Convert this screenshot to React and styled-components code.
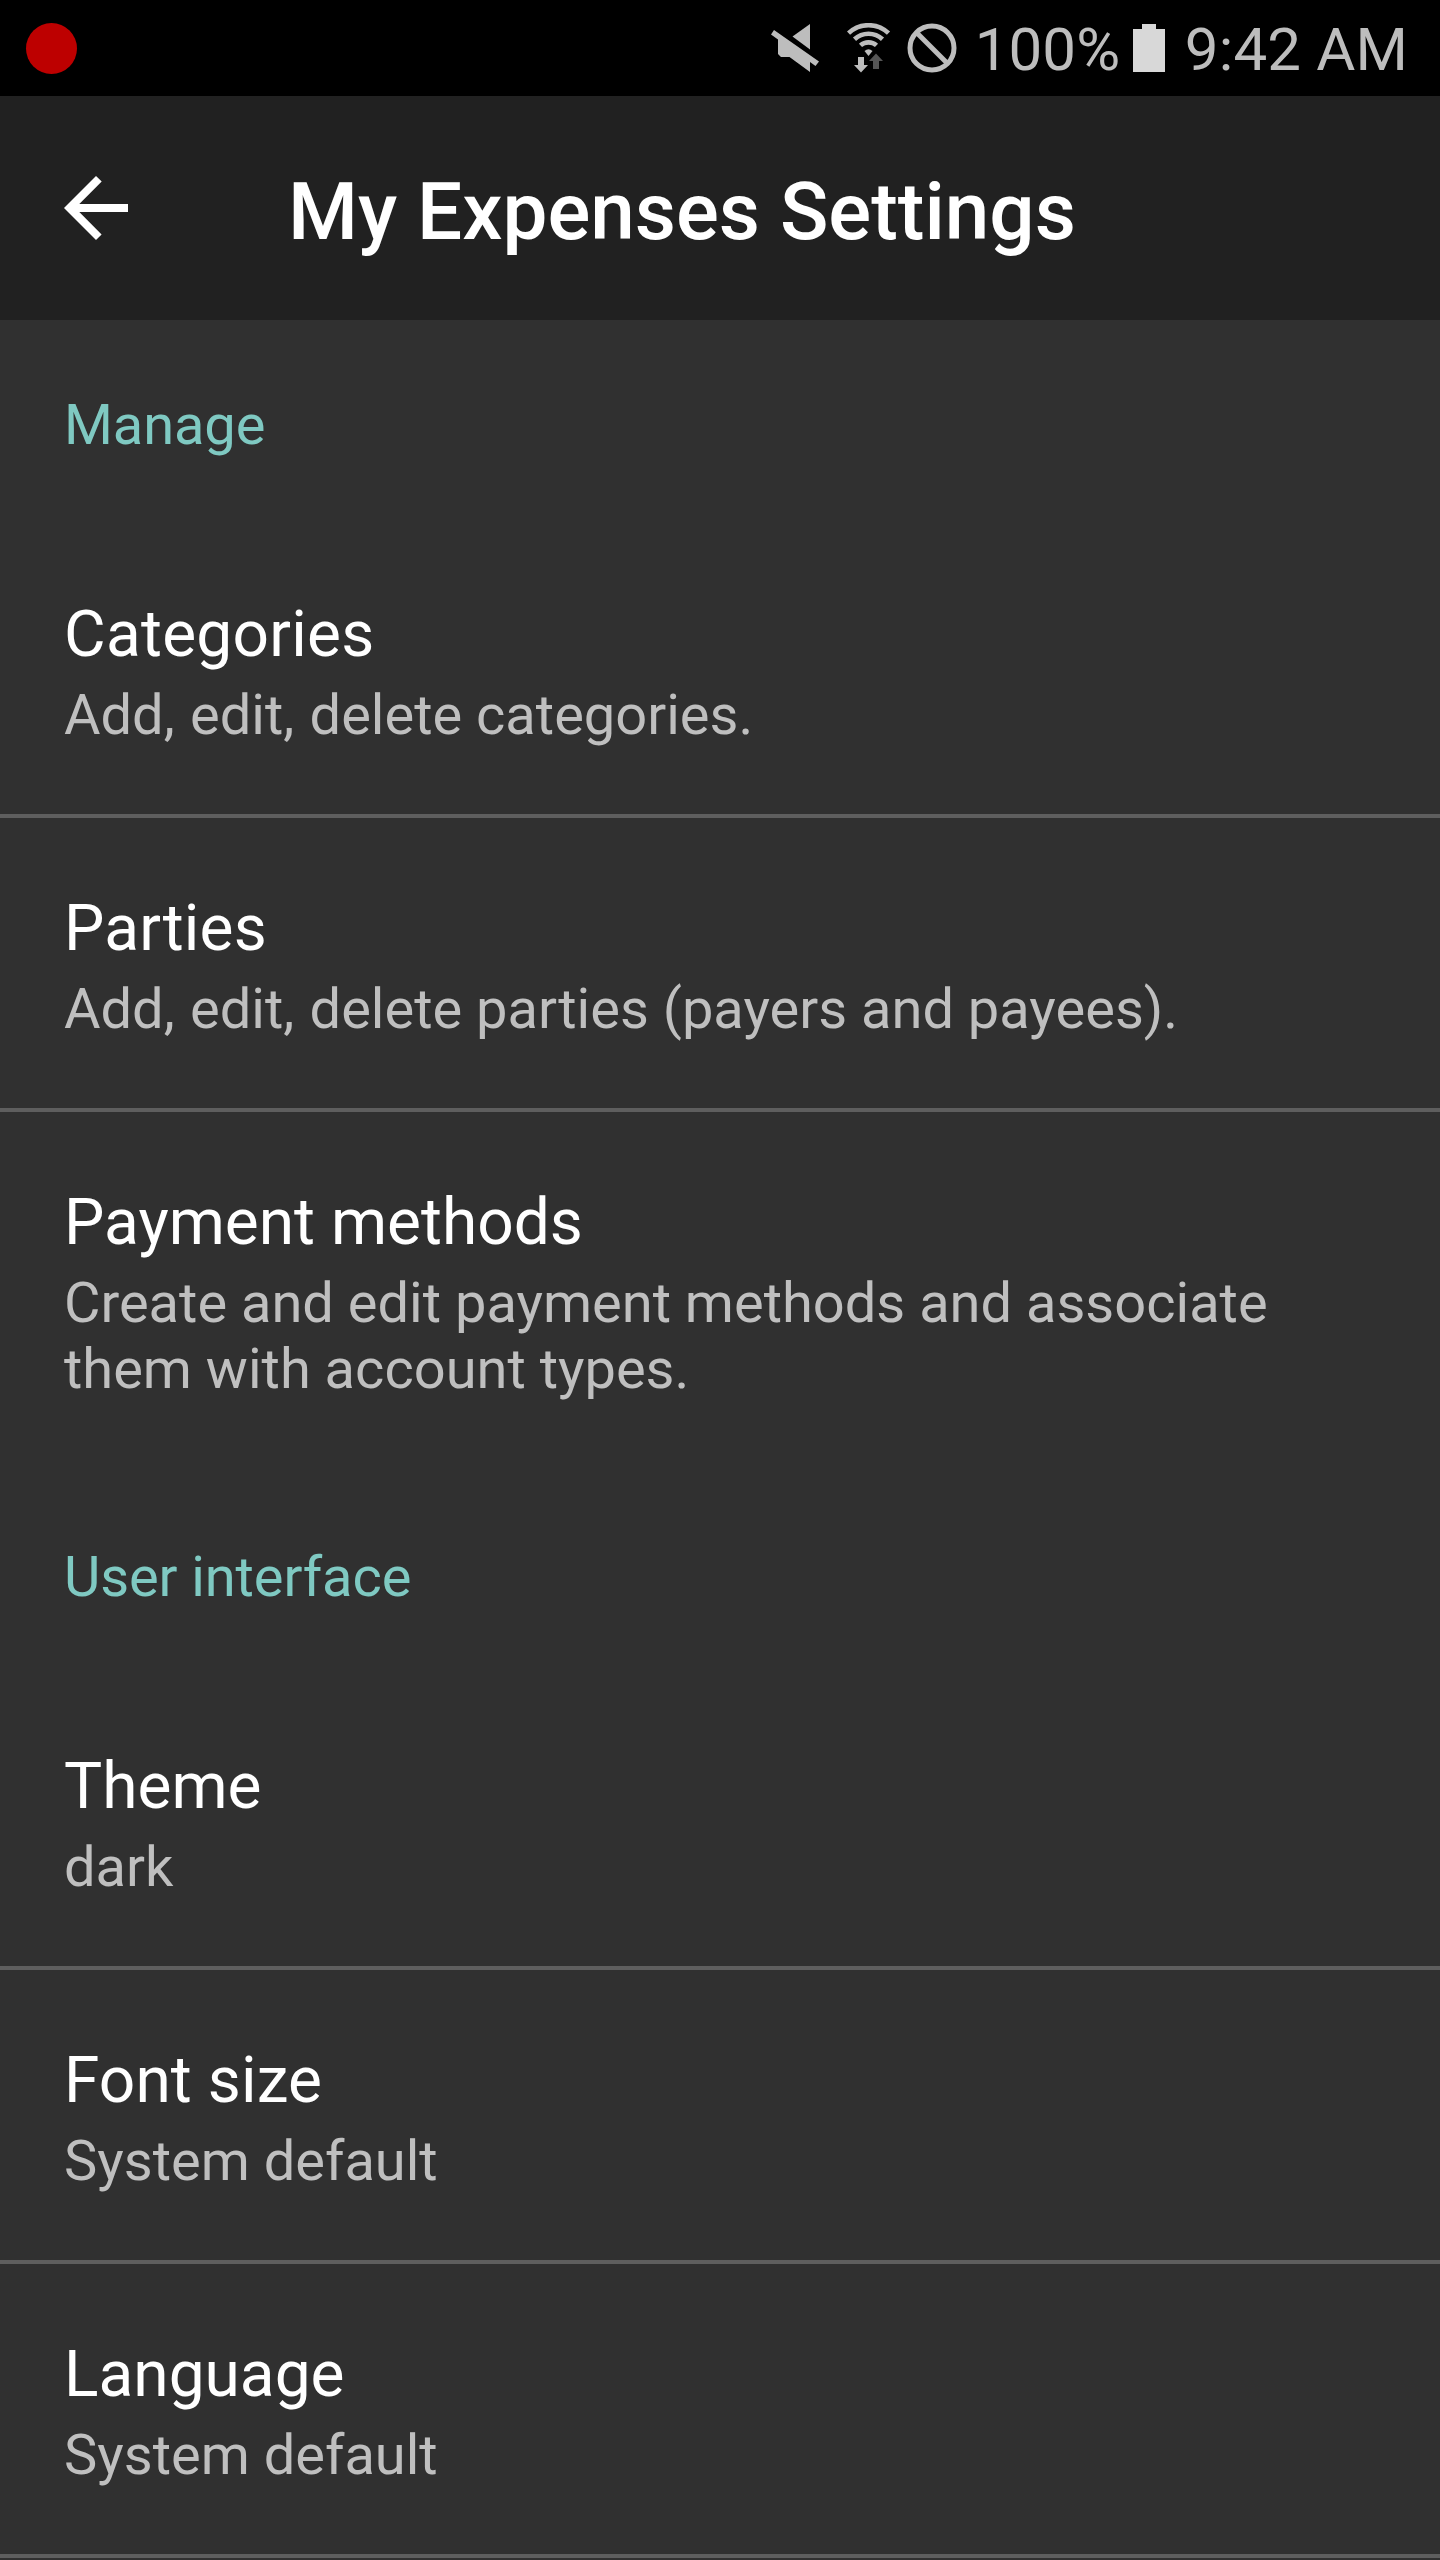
import React from "react";
import styled, { createGlobalStyle } from "styled-components";

const GlobalStyle = createGlobalStyle`
  html, body { margin: 0; background: #303030; }
  * { box-sizing: border-box; }
`;

const Screen = styled.div`
  width: 1440px;
  height: 2560px;
  overflow: hidden;
  display: flex;
  flex-direction: column;
  background: #303030;
  font-family: Roboto, "Liberation Sans", sans-serif;
  font-weight: 400;
`;

const StatusBar = styled.div`
  height: 96px;
  flex: none;
  display: flex;
  align-items: center;
  padding: 0 32px 0 26px;
  background: #000;
  color: #bdbdbd;
`;

const RecordDot = styled.div`
  width: 51px;
  height: 51px;
  border-radius: 50%;
  background: #bd0000;
  margin-right: auto;
`;

const Glyph = styled.svg`
  display: block;
  flex: none;
  width: ${(p) => p.$w}px;
  height: 50px;
  margin-right: ${(p) => p.$gap}px;
`;

const StatusText = styled.span`
  font-size: 60px;
  line-height: 70px;
  letter-spacing: 0.15px;
  padding-top: 4px;
  white-space: nowrap;
  margin-right: ${(p) => p.$gap || 0}px;
`;

const Toolbar = styled.header`
  height: 224px;
  flex: none;
  display: flex;
  align-items: center;
  padding-left: 64px;
  background: #212121;
`;

const BackIcon = styled.svg`
  display: block;
  width: 64px;
  height: 64px;
  margin-right: 160px;
`;

const Title = styled.h1`
  margin: 0;
  padding-top: 7px;
  font-size: 80px;
  line-height: 94px;
  font-weight: 500;
  color: #fff;
  white-space: nowrap;
`;

const SectionHeader = styled.h2`
  margin: 0;
  height: 204px;
  flex: none;
  padding: 72px 64px 0;
  font-size: 56px;
  line-height: 66px;
  letter-spacing: -0.1px;
  font-weight: 400;
  color: #7fc9c2;
`;

const Row = styled.div`
  flex: none;
  padding: 73px 64px 66px;
  border-bottom: 4px solid ${(p) => (p.$divider ? "#5e5e5e" : "transparent")};
`;

const RowTitle = styled.div`
  font-size: 64px;
  line-height: 76px;
  letter-spacing: ${(p) => p.$tracking || 0}px;
  color: #fff;
`;

const Summary = styled.div`
  margin-top: 9px;
  font-size: 56px;
  line-height: 66px;
  color: #bfbfbf;
`;

const Comma = styled.span`
  margin-right: 1.4px;
`;

const sections = [
  {
    name: "Manage",
    items: [
      { title: "Categories", tracking: 0.25, summary: "Add, edit, delete categories." },
      { title: "Parties", tracking: 0.2, summary: "Add, edit, delete parties (payers and payees)." },
      {
        title: "Payment methods",
        summary: "Create and edit payment methods and associate them with account types.",
        last: true,
      },
    ],
  },
  {
    name: "User interface",
    items: [
      { title: "Theme", summary: "dark" },
      { title: "Font size", tracking: 0.1, summary: "System default" },
      { title: "Language", summary: "System default" },
    ],
  },
];

function withCommas(text) {
  return text.split(",").map((part, i) => (
    <React.Fragment key={i}>
      {i > 0 && <Comma>,</Comma>}
      {part}
    </React.Fragment>
  ));
}

function MuteIcon() {
  return (
    <Glyph $w={49} $gap={27} viewBox="771 23 49 50" fill="#bdbdbd">
      <path d="M792.5 36.5 810 24V49.500Z" />
      <path d="M774 30 819 61.500 815.500 66 810 62V72L789.500 57H781L778 54V39.500L771 34.500Z" />
    </Glyph>
  );
}

function WifiIcon() {
  return (
    <Glyph $w={44} $gap={16} viewBox="847 23 44 50" fill="none">
      <g stroke="#bdbdbd" strokeWidth="4.6">
        <path d="M848.500 33.200A29 29 0 0 1 888.500 33.200" />
        <path d="M854.500 39.300A20.500 20.500 0 0 1 882.500 39.300" />
        <path d="M860.500 45.400A12 12 0 0 1 876.500 45.400" />
      </g>
      <path fill="#bdbdbd" d="M864.500 51Q868.500 47.500 872.500 51L868.500 56Z" />
      <path fill="#bdbdbd" d="M858 57h6v8h4L861 72.500 854 65h4Z" />
      <path fill="#555" d="M873 69h6V61h4L876 53.500 869 61h4Z" />
    </Glyph>
  );
}

function BlockedIcon() {
  return (
    <Glyph $w={50} $gap={18} viewBox="906.500 23 50 50" fill="none" stroke="#bdbdbd" strokeWidth="5">
      <circle cx="931.500" cy="48" r="22" />
      <path d="M916 32.500 947 63.500" />
    </Glyph>
  );
}

function BatteryIcon() {
  return (
    <Glyph $w={32} $gap={20} viewBox="0 0 32 50">
      <path fill="#d8d8d8" d="M9 1H23V6H32V49H0V6H9Z" />
    </Glyph>
  );
}

export default function App() {
  return (
    <Screen>
      <GlobalStyle />
      <StatusBar>
        <RecordDot />
        <MuteIcon />
        <WifiIcon />
        <BlockedIcon />
        <StatusText $gap={12.5}>100%</StatusText>
        <BatteryIcon />
        <StatusText>9:42 AM</StatusText>
      </StatusBar>
      <Toolbar>
        <BackIcon viewBox="0 0 64 64" fill="#fff">
          <path d="M64 28H15.300L37.700 5.600 32 0 0 32 32 64 37.600 58.400 15.300 36H64Z" />
        </BackIcon>
        <Title>My Expenses Settings</Title>
      </Toolbar>
      {sections.map((section) => (
        <React.Fragment key={section.name}>
          <SectionHeader>{section.name}</SectionHeader>
          {section.items.map((item) => (
            <Row key={item.title} $divider={!item.last}>
              <RowTitle $tracking={item.tracking}>{item.title}</RowTitle>
              <Summary>{withCommas(item.summary)}</Summary>
            </Row>
          ))}
        </React.Fragment>
      ))}
    </Screen>
  );
}
